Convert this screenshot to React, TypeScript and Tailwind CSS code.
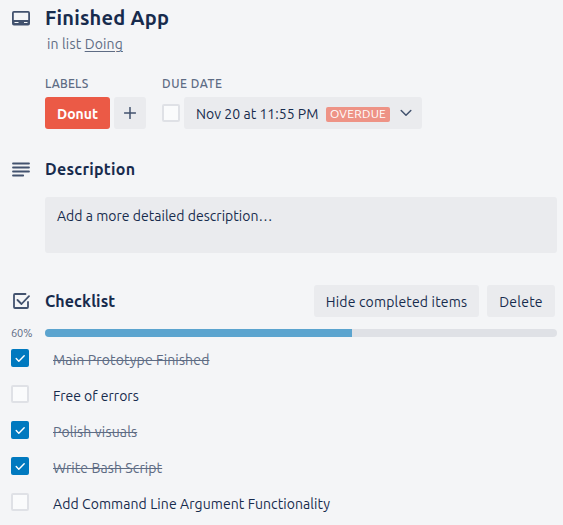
import type { ReactNode } from 'react';

const INK = '#42526e';

function CardIcon() {
  return (
    <svg width="18" height="15" viewBox="0 0 18 15" fill="none" className="block">
      <rect x=".9" y=".9" width="16.200" height="12.700" rx="1" stroke={INK} strokeWidth="1.800" />
      <path d="M1 9h16v4.600H1z" fill={INK} />
      <path d="M2.500 11.500h4M12 11.500h3.500" stroke="#f4f5f7" strokeWidth="1.200" />
    </svg>
  );
}

function LinesIcon() {
  return (
    <svg width="18" height="15" viewBox="0 0 18 15" className="block">
      <path d="M1 1.500h16M1 5.500h16M1 9.500h16M1 13.500h10.200" stroke={INK} strokeWidth="1.800" strokeLinecap="round" />
    </svg>
  );
}

function ChecklistIcon() {
  return (
    <svg width="18" height="16" viewBox="0 0 18 16" fill="none" className="block">
      <path d="M13.500 1H3A1 1 0 0 0 2 2v12a1 1 0 0 0 1 1h12a1 1 0 0 0 1-1V9" stroke={INK} strokeWidth="1.800" strokeLinecap="round" />
      <path d="M5.500 7l4 4L17 3.200" stroke={INK} strokeWidth="1.800" strokeLinecap="round" strokeLinejoin="round" />
    </svg>
  );
}

function Checkbox({ checked = false }: { checked?: boolean }) {
  if (!checked) {
    return <span className="block size-[18px] shrink-0 rounded-[2px] border-2 border-[#dfe1e6] bg-[#fafbfc]" />;
  }
  return (
    <span className="block size-[18px] shrink-0 rounded-[2px] bg-[#0079bf]">
      <svg width="18" height="18" viewBox="0 0 18 18" fill="none" className="block">
        <path d="M5.200 9.600l2.600 2.700 5.400-5.600" stroke="#fff" strokeWidth="1.400" strokeLinecap="round" strokeLinejoin="round" />
      </svg>
    </span>
  );
}

function Heading({ icon, children }: { icon: ReactNode; children: ReactNode }) {
  return (
    <div className="flex h-8 items-center">
      <span className="w-[34px] shrink-0 pl-px">{icon}</span>
      {children}
    </div>
  );
}

const items = [
  { text: 'Main Prototype Finished', done: true, spacing: 'tracking-[0.15px]' },
  { text: 'Free of errors', done: false, spacing: 'tracking-normal' },
  { text: 'Polish visuals', done: true, spacing: 'tracking-[0.16px]' },
  { text: 'Write Bash Script', done: true, spacing: 'tracking-[0.1px]' },
  { text: 'Add Command Line Argument Functionality', done: false, spacing: 'tracking-[0.08px]' },
];

export default function App() {
  return (
    <div className="h-[525px] w-[563px] overflow-hidden whitespace-nowrap bg-[#f4f5f7] pl-[11px] font-[Ubuntu,'Noto_Sans',sans-serif] text-[14px] leading-5 text-[#172b4d]">
      <header className="h-[77px] pt-[2px]">
        <Heading icon={<CardIcon />}>
          <h1 className="text-[20px] font-bold leading-8 tracking-[0.22px]">Finished App</h1>
        </Heading>
        <p className="pl-9 text-[#5e6c84] tracking-[0.15px]">
          in list <a className="underline underline-offset-2">Doing</a>
        </p>
      </header>

      <section className="flex h-[76px] gap-4 pl-[34px]">
        <div>
          <h3 className="h-5 text-[12px] font-medium leading-[14px] text-[#5e6c84] tracking-[0.15px]">LABELS</h3>
          <div className="flex gap-1">
            <span className="flex h-8 w-[65px] items-center justify-center rounded-[3px] bg-[#eb5a46] pt-[2px] font-bold text-white">Donut</span>
            <button className="flex size-8 items-center justify-center rounded-[3px] bg-[#eaebee]">
              <svg width="12" height="12" viewBox="0 0 12 12">
                <path d="M6 .5v11M.5 6h11" stroke={INK} strokeWidth="1.500" strokeLinecap="round" />
              </svg>
            </button>
          </div>
        </div>
        <div>
          <h3 className="h-5 text-[12px] font-medium leading-[14px] text-[#5e6c84] tracking-[0.55px]">DUE DATE</h3>
          <div className="flex items-center gap-1">
            <Checkbox />
            <button className="flex h-8 w-[238px] items-center rounded-[3px] bg-[#eaebee] pl-3">
              <span className="w-[130px] pt-[2px] text-left tracking-[0.03px]">Nov 20 at 11:55 PM</span>
              <span className="mt-[3px] flex h-[15px] w-16 items-center justify-center rounded-[2px] bg-[#ee9386] pb-px text-[12px] tracking-[0.25px] text-white">OVERDUE</span>
              <svg width="12" height="8" viewBox="0 0 12 8" fill="none" className="ml-[10px]">
                <path d="M1.200 1.500L6 6.300l4.800-4.800" stroke={INK} strokeWidth="1.500" strokeLinecap="round" strokeLinejoin="round" />
              </svg>
            </button>
          </div>
        </div>
      </section>

      <section className="h-[132px]">
        <Heading icon={<LinesIcon />}>
          <h2 className="text-[16px] font-bold tracking-[0.28px]">Description</h2>
        </Heading>
        <div className="ml-[34px] mt-3 h-14 w-[512px] rounded-[3px] bg-[#eaebee] px-3 py-[9px] tracking-[0.02px]">
          Add a more detailed description…
        </div>
      </section>

      <section>
        <div className="flex w-[544px] justify-between">
          <Heading icon={<ChecklistIcon />}>
            <h2 className="text-[16px] font-bold tracking-[0.1px]">Checklist</h2>
          </Heading>
          <div className="flex gap-2">
            <button className="h-8 w-[165px] rounded-[3px] bg-[#eaebee] pt-[2px] tracking-[0.17px]">Hide completed items</button>
            <button className="h-8 w-[68px] rounded-[3px] bg-[#eaebee] pt-[2px] tracking-[0.25px]">Delete</button>
          </div>
        </div>
        <div className="mt-[10px] flex h-3 items-center">
          <span className="w-[34px] text-[11px] leading-3 text-[#5e6c84] tracking-[-0.1px]">60%</span>
          <div className="h-2 w-[512px] overflow-hidden rounded-full bg-[#dfe1e6]">
            <div className="h-full w-[307px] bg-[#5ba4cf]" />
          </div>
        </div>
        <ul className="pt-[10px]">
          {items.map((item) => (
            <li key={item.text} className="flex h-9 items-start gap-6">
              <Checkbox checked={item.done} />
              <span className={`mt-px ${item.spacing} ${item.done ? 'text-[#5e6c84] line-through' : ''}`}>{item.text}</span>
            </li>
          ))}
        </ul>
      </section>
    </div>
  );
}
